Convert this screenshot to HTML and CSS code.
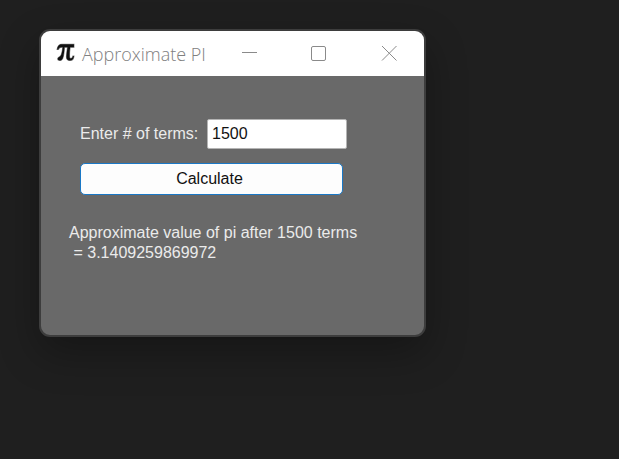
FILE: index.html
```
<!DOCTYPE html>
<html lang="en">
<head>
<meta charset="utf-8">
<title>Approximate PI</title>
<link rel="stylesheet" href="styles.css">
</head>
<body>
<main class="window">
  <header class="titlebar">
    <svg class="app-icon" viewBox="0 0 18 18" aria-hidden="true">
      <path d="M1 6.200C1.600 2.600 3 1.200 5.600 1.200H17V4H13.400C13 7 12.700 10 12.800 12.600C12.900 14.400 13.600 14.900 14.600 14.500C15.400 14.200 15.800 13.400 16 12.400H17C16.800 15.200 15.600 16.600 13.200 16.600C10.800 16.600 9.800 15.200 9.900 12.800C10 10 10.500 7 10.900 4H8C7.800 8 7.400 12 6.400 14.400C5.800 16 4.800 16.600 3.600 16.600C2.400 16.600 1.600 16 1.600 15.200C1.600 14.400 2.200 13.800 3.400 13.100C5.200 12 6 8 6.400 4H5.400C3.600 4 2.900 4.700 2.200 6.200Z"/>
    </svg>
    <h1 class="title">Approximate PI</h1>
    <div class="controls">
      <button class="control" type="button" aria-label="Minimize">
        <svg class="glyph" viewBox="0 0 16 16" aria-hidden="true"><path d="M1 6.500H16"/></svg>
      </button>
      <button class="control" type="button" aria-label="Maximize">
        <svg class="glyph" viewBox="0 0 16 16" aria-hidden="true"><rect x="0.500" y="0.500" width="14" height="14" rx="1.500"/></svg>
      </button>
      <button class="control" type="button" aria-label="Close">
        <svg class="glyph" viewBox="0 0 16 16" aria-hidden="true"><path d="M1 0L15.500 14.500M15.500 0L1 14.500"/></svg>
      </button>
    </div>
  </header>
  <form class="form">
    <div class="field">
      <label class="label" for="terms">Enter # of terms:</label>
      <input class="input" id="terms" type="text" value="1500">
    </div>
    <button class="calculate" type="button">Calculate</button>
    <output class="result" for="terms">Approximate value of pi after 1500 terms
 = 3.1409259869972</output>
  </form>
</main>
</body>
</html>
```
FILE: styles.css
```
* {
  box-sizing: border-box;
}

body {
  margin: 0;
  min-height: 100vh;
  padding: 29px 39px;
  background: #1f1f1f;
  font-family: "Liberation Sans", Arial, sans-serif;
  font-size: 16px;
}

.window {
  max-width: 387px;
  border: 2px solid #3d3d3d;
  border-radius: 11px;
  overflow: hidden;
  background: #696969;
  box-shadow: 0 16px 40px rgba(0, 0, 0, 0.3);
}

.titlebar {
  display: flex;
  align-items: center;
  height: 45px;
  padding-left: 15px;
  background: #fff;
}

.app-icon {
  flex: none;
  width: 19px;
  height: 19px;
  margin: 0 7px 2px 0;
  fill: #111;
  stroke: #111;
  stroke-opacity: 0.5;
}

.title {
  margin: 0;
  flex: 1;
  color: #808080;
  font-family: "Open Sans", sans-serif;
  font-size: 18px;
  font-weight: 300;
  white-space: nowrap;
}

.controls {
  display: flex;
  align-self: stretch;
}

.control {
  display: grid;
  place-items: center;
  width: 70px;
  padding: 0;
  border: 0;
  background: none;
}

.glyph {
  width: 16px;
  height: 16px;
  fill: none;
  stroke: #8a8a8a;
}

.form {
  display: flex;
  flex-direction: column;
  padding: 43px 28px 72px;
  color: #ebebeb;
}

.field {
  display: flex;
  align-items: center;
  gap: 10px;
  padding-left: 11px;
}

.label {
  width: 117px;
  white-space: nowrap;
}

.input {
  width: 140px;
  height: 30px;
  padding: 0 4px;
  border: 1px solid #b4b4b4;
  border-radius: 2px;
  background: #fff;
  color: #111;
  font: inherit;
}

.calculate {
  width: 263px;
  height: 32px;
  margin: 14px 0 28px 11px;
  padding: 0 4px 0 0;
  border: 1px solid #1a78c6;
  border-radius: 5px;
  background: #fdfdfd;
  color: #111;
  font: inherit;
}

.result {
  line-height: 20px;
  white-space: pre-wrap;
}
```
